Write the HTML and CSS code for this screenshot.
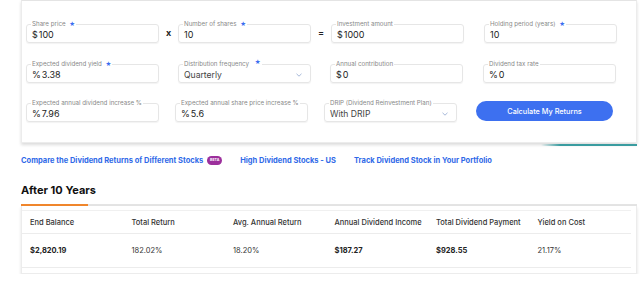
FILE: index.html
```html
<!DOCTYPE html>
<html>
<head>
    <meta charset="UTF-8">
    <title>Dividend Calculator</title>
    <link rel="stylesheet" href="styles.css">
</head>
<body>
<div class="page">
    <section class="calc">
        <div class="row">
            <fieldset class="field"><legend>Share price <i class="req">★</i></legend><div class="val"><span class="pre">$</span>100</div></fieldset>
            <span class="op">x</span>
            <fieldset class="field"><legend>Number of shares <i class="req">★</i></legend><div class="val">10</div></fieldset>
            <span class="op eq">=</span>
            <fieldset class="field"><legend>Investment amount</legend><div class="val"><span class="pre">$</span>1000</div></fieldset>
            <fieldset class="field gap-l"><legend>Holding period (years) <i class="req">★</i></legend><div class="val">10</div></fieldset>
        </div>
        <div class="row row2">
            <fieldset class="field"><legend>Expected dividend yield <i class="req">★</i></legend><div class="val"><span class="pre">%</span>3.38</div></fieldset>
            <span class="op"></span>
            <fieldset class="field sel"><legend>Distribution frequency <i class="req up">★</i></legend><div class="val">Quarterly<svg class="chev" width="6" height="4" viewBox="0 0 6 4"><polyline points="0.5,0.8 3,3.2 5.5,0.8" /></svg></div></fieldset>
            <span class="op"></span>
            <fieldset class="field"><legend>Annual contribution</legend><div class="val"><span class="pre">$</span>0</div></fieldset>
            <fieldset class="field gap-l"><legend>Dividend tax rate</legend><div class="val"><span class="pre">%</span>0</div></fieldset>
        </div>
        <div class="row row3">
            <fieldset class="field"><legend>Expected annual dividend increase %</legend><div class="val"><span class="pre">%</span>7.96</div></fieldset>
            <fieldset class="field"><legend>Expected annual share price increase %</legend><div class="val"><span class="pre">%</span>5.6</div></fieldset>
            <fieldset class="field sel"><legend>DRIP (Dividend Reinvestment Plan)</legend><div class="val">With DRIP<svg class="chev" width="6" height="4" viewBox="0 0 6 4"><polyline points="0.5,0.8 3,3.2 5.5,0.8" /></svg></div></fieldset>
            <button class="btn">Calculate My Returns</button>
        </div>
    </section>

    <nav class="links">
        <a href="#">Compare the Dividend Returns of Different Stocks</a>
        <span class="beta">BETA</span>
        <a href="#" class="lk">High Dividend Stocks - US</a>
        <a href="#" class="lk">Track Dividend Stock in Your Portfolio</a>
    </nav>

    <h2 class="title">After 10 Years</h2>
    <div class="tabline"><span></span></div>

    <div class="results">
        <table>
            <tr class="head">
                <td>End Balance</td>
                <td>Total Return</td>
                <td>Avg. Annual Return</td>
                <td>Annual Dividend Income</td>
                <td>Total Dividend Payment</td>
                <td>Yield on Cost</td>
            </tr>
            <tr class="vals">
                <td><b>$2,820.19</b></td>
                <td>182.02%</td>
                <td>18.20%</td>
                <td><b>$187.27</b></td>
                <td><b>$928.55</b></td>
                <td>21.17%</td>
            </tr>
        </table>
    </div>
</div>
</body>
</html>
```

FILE: styles.css
```css
html, body {
    margin: 0;
    padding: 0;
    background: #fff;
}

body {
    font-family: Inter, "Noto Sans", sans-serif;
    color: #222;
}

.page {
    width: 640px;
    padding-left: 21px;
    box-sizing: border-box;
}

/* calculator card */
.calc {
    position: relative;
    width: 616px;
    box-sizing: border-box;
    border: 1px solid #ececec;
    border-top-color: #e4e4e4;
    padding: 20px 0 20px 4px;
    box-shadow: 0 2px 3px rgba(0, 0, 0, 0.14);
}

.calc::after {
    content: "";
    position: absolute;
    right: -1px;
    bottom: -4px;
    width: 96px;
    height: 2px;
    background: linear-gradient(to right, rgba(58, 156, 160, 0), #3a9ca0 20%);
}

.row {
    display: flex;
    align-items: flex-end;
}

.row2 {
    margin-top: 18px;
}

.row3 {
    margin-top: 17px;
    gap: 16px;
}

.field {
    width: 133px;
    box-sizing: border-box;
    margin: 0;
    padding: 0 5px;
    min-width: 0;
    border: 1px solid #e6e6e6;
    border-radius: 3px;
    box-shadow: 0 1px 1px rgba(0, 0, 0, 0.05);
}

.field legend {
    font-size: 6.2px;
    line-height: 6px;
    color: #888;
    padding: 0 1px;
    margin-left: -1px;
    white-space: nowrap;
}

.req {
    font-style: normal;
    color: #3b6ef0;
    font-size: 6.5px;
    line-height: 6px;
    font-family: "DejaVu Sans", sans-serif;
    margin-left: 2px;
}

.req.up {
    position: relative;
    top: -2px;
    margin-left: 4px;
}

.val {
    height: 15px;
    line-height: 14px;
    font-size: 9px;
    color: #222;
    display: flex;
    align-items: center;
}

.pre {
    margin-right: 1px;
}

.sel .val {
    font-size: 8.6px;
    color: #444;
    justify-content: space-between;
}

.chev {
    margin-right: 3px;
}

.chev polyline {
    fill: none;
    stroke: #8fa6cf;
    stroke-width: 0.8;
}

.op {
    width: 19px;
    text-align: center;
    font-size: 9px;
    font-weight: 700;
    line-height: 20px;
    color: #222;
    flex-shrink: 0;
}

.op.eq {
    width: 20px;
    font-weight: 600;
}

.gap-l {
    margin-left: 20px;
}

.btn {
    width: 137px;
    height: 20px;
    margin: 0 0 1px 3px;
    border: none;
    border-radius: 10px;
    background: #3d70f0;
    color: #fff;
    font-family: Inter, sans-serif;
    font-size: 7.3px;
    font-weight: 500;
    padding: 0;
}

/* links */
.links {
    display: flex;
    align-items: center;
    margin-top: 13px;
    height: 9px;
    font-size: 7.5px;
    font-weight: 700;
}

.links a {
    color: #2f69e8;
    text-decoration: none;
    white-space: nowrap;
}

.beta {
    width: 15px;
    height: 9px;
    border-radius: 5px;
    background: #9c2f9c;
    color: #fff;
    font-size: 3.6px;
    line-height: 9px;
    text-align: center;
    margin-left: 4px;
}

.lk {
    margin-left: 18px;
}

.title {
    margin: 18px 0 0 0;
    font-size: 11px;
    line-height: 14px;
    font-weight: 700;
    color: #111;
}

.tabline {
    margin-top: 7px;
    width: 616px;
    height: 2px;
    background: #e4e4e4;
}

.tabline span {
    display: block;
    width: 67px;
    height: 2px;
    background: #f0862c;
}

/* results table */
.results {
    position: relative;
    width: 616px;
    box-sizing: border-box;
    border: 1px solid #ececec;
    border-top: none;
    padding: 4px 5px 5px 0;
    box-shadow: 0 2px 3px rgba(0, 0, 0, 0.12);
}

.results::after {
    content: "";
    position: absolute;
    right: -1px;
    bottom: -3px;
    width: 96px;
    height: 2px;
    background: linear-gradient(to right, rgba(58, 156, 160, 0), #3a9ca0 20%);
}

.results table {
    width: 100%;
    border-collapse: collapse;
    table-layout: fixed;
}

.results td {
    padding: 0 0 0 8px;
    border-bottom: 1px solid #ececec;
    font-size: 7.5px;
    color: #333;
    white-space: nowrap;
}

.head td {
    height: 22px;
    border-top: 1px solid #f0f0f0;
    font-weight: 500;
}

.vals td {
    height: 33px;
    color: #333;
}

.vals b {
    font-weight: 700;
    color: #222;
}
```
